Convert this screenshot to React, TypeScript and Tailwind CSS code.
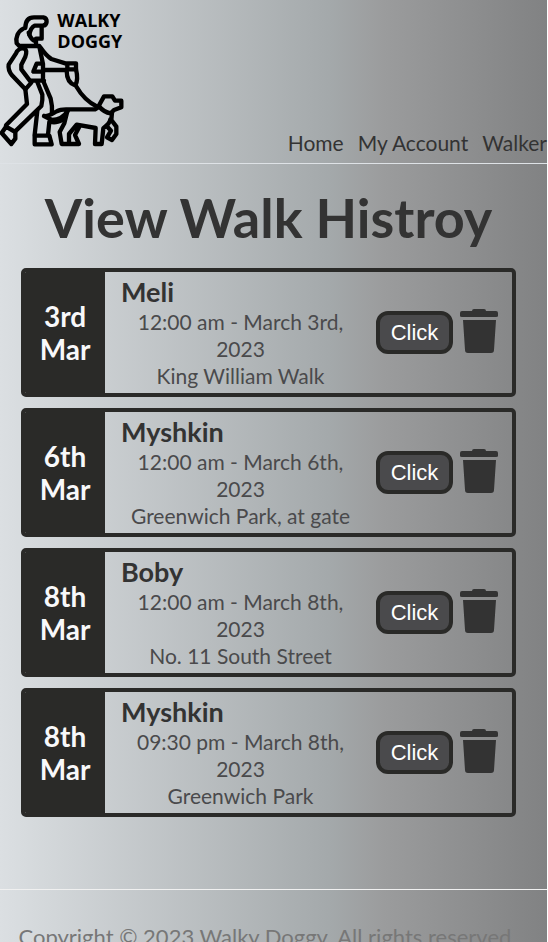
import React from "react";

type Walk = { id: number; day: string; month: string; dog: string; time: string; place: string };

const walks: Walk[] = [
  { id: 1, day: "3rd", month: "Mar", dog: "Meli", time: "12:00 am - March 3rd, 2023", place: "King William Walk" },
  { id: 2, day: "6th", month: "Mar", dog: "Myshkin", time: "12:00 am - March 6th, 2023", place: "Greenwich Park, at gate" },
  { id: 3, day: "8th", month: "Mar", dog: "Boby", time: "12:00 am - March 8th, 2023", place: "No. 11 South Street" },
  { id: 4, day: "8th", month: "Mar", dog: "Myshkin", time: "09:30 pm - March 8th, 2023", place: "Greenwich Park" },
];

function Logo() {
  return (
    <svg viewBox="0 36 375 408" className="h-[136px] w-[125px]" role="img" aria-label="Walky Doggy">
      <g fill="none" stroke="#000" strokeWidth="13" strokeLinejoin="round" strokeLinecap="round">
        <path d="M76 84C76 62 86 52 102 52H130C144 55 143 76 128 77H104C94 82 90 94 88 104" />
        <path d="M125 80V116H108V134M86 98C90 112 96 120 106 124" />
        <path d="M70 86C54 94 46 112 50 130L58 138H118C128 152 138 168 154 177L196 190H228V208H202V190" />
        <path d="M74 146C62 142 52 150 48 160L26 194C24 206 28 216 36 226L76 268L94 248L64 208V194L76 170C80 158 80 150 74 146" />
        <path d="M118 140L129 192V236M126 191H110L100 215H130M130 210H200M94 242H132" />
        <path d="M76 268L81 312L18 376M112 246L127 284C128 296 127 306 124 318L48 392M131 246L152 296C156 312 157 326 156 340M112 332L104 404M148 366L144 404" />
        <path d="M18 380L5 399L34 432L46 416V396ZM104 407H148L155 433H104Z" />
        <path d="M200 212C200 232 206 250 226 256C233 244 232 224 228 208M228 258C244 286 266 308 292 320" />
        <path d="M132 348C146 350 158 340 170 334C180 328 186 328 198 328H285L298 320M132 348L156 360C176 360 192 350 204 332M150 365C164 370 184 366 196 350" />
        <path d="M202 334L193 370L179 396L185 432H237L225 405L238 380M207 430V402L230 374L287 384L285 432H305L310 385C322 376 330 368 331 358" />
        <path d="M336 338L334 360L349 380V402L336 420L321 412L333 392L322 380" />
        <path d="M296 318L312 289H337L345 302H364V322L342 330L332 340C318 338 306 330 296 318" />
      </g>
      <g fill="#000" fontFamily="'Open Sans', sans-serif" fontWeight="700" fontSize="54">
        <text x="172" y="80">WALKY</text>
        <text x="172" y="143">DOGGY</text>
      </g>
    </svg>
  );
}

function TrashIcon() {
  return (
    <svg viewBox="0 0 38 44" className="h-11 w-[38px]" fill="#333" aria-hidden="true">
      <path d="M12 2Q12 0 14 0H24Q26 0 26 2H36Q38 2 38 4V7Q38 8 36 8H2Q0 8 0 7V4Q0 2 2 2Z" />
      <path d="M3 11H36L34 41Q34 44 31 44H8Q5 44 5 41Z" />
    </svg>
  );
}

export default function App() {
  return (
    <div className="h-screen overflow-hidden bg-white pr-px font-['Lato',sans-serif] text-[#333]">
      <div className="flex h-full flex-col bg-[linear-gradient(to_right,#dbdfe2_0%,#a4a9ab_60%,#9b9c9d_70%,#818283_100%)]">
        <header className="flex h-[164px] shrink-0 items-end justify-between border-b border-[#dee2e6] pb-2">
          <a href="#home" className="shrink-0 self-start pt-3">
            <Logo />
          </a>
          <nav className="flex shrink-0 gap-[14px] text-[21px] leading-6">
            <a href="#home">Home</a>
            <a href="#account">My Account</a>
            <a href="#walker">Walker</a>
          </nav>
        </header>
        <main className="shrink-0 px-[21px] pt-[22px] pr-[31px]">
          <h1 className="text-center text-[54px] leading-[64px] font-bold whitespace-nowrap">View Walk Histroy</h1>
          <ul className="mt-[18px] flex flex-col gap-[11px]">
            {walks.map((walk) => (
              <li key={walk.id} className="flex h-[129px] overflow-hidden rounded-[5px] border-4 border-[#2a2a28]">
                <div className="flex w-20 shrink-0 flex-col justify-center bg-[#2a2a28] text-center text-[28px] leading-[33px] font-bold text-[#f8f8fa]">
                  <span>{walk.day}</span>
                  <span>{walk.month}</span>
                </div>
                <div className="min-w-0 flex-1 px-4 pt-1 text-center text-[21px] leading-[27px] text-[#4a4a4c]">
                  <h2 className="text-left text-[27px] leading-8 font-bold text-[#333]">{walk.dog}</h2>
                  <p className="px-3">{walk.time}</p>
                  <p className="whitespace-nowrap">{walk.place}</p>
                </div>
                <div className="flex shrink-0 items-center gap-[7px] pr-[14px]">
                  <button className="h-[43px] w-[77px] rounded-[12px] border-4 border-[#2a2a28] bg-[#4a4a4c] font-['Liberation_Sans',sans-serif] text-[22px] leading-6 text-white">
                    Click
                  </button>
                  <button aria-label="Delete walk" className="pb-1">
                    <TrashIcon />
                  </button>
                </div>
              </li>
            ))}
          </ul>
        </main>
        <footer className="mt-[72px] shrink-0 border-t border-[#f0f0f0] pt-[33px] pr-3 text-center text-[22px] leading-7 text-[#777]">
          Copyright © 2023 Walky Doggy. All rights reserved.
        </footer>
      </div>
    </div>
  );
}
